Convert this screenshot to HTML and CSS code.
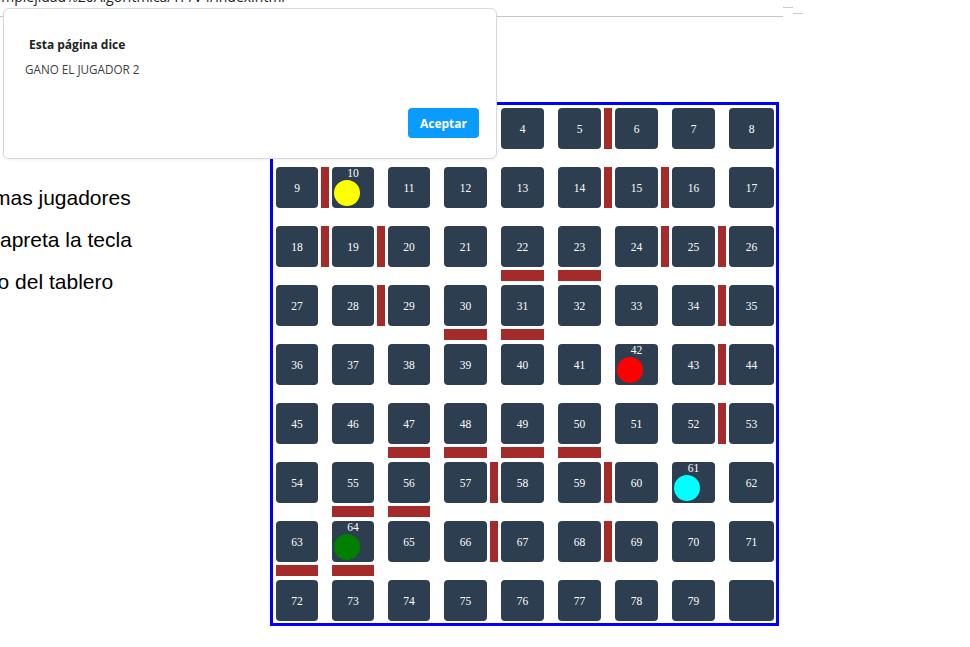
FILE: index.html
```html
<!DOCTYPE html>
<html lang="es">
<head>
<meta charset="utf-8">
<title>Tablero</title>
<link rel="stylesheet" href="styles.css">
</head>
<body>
<div class="chrome">
  <div class="addr"><span class="addr-text">Complejidad%20Algoritmica/TP/V4/index.html</span></div>
  <div class="dashes"><i class="d1"></i><i class="d2"></i></div>
</div>
<div class="page">
  <div class="info">
    <p>Es un juego de 2 o mas jugadores</p>
    <p>Para lanzar el dado apreta la tecla</p>
    <p>Llega al otro extremo del tablero</p>
  </div>
  <div class="board">
    <div class="c">0</div><div class="c">1</div><div class="c">2</div><div class="c">3</div><div class="c">4</div><div class="c wr">5</div><div class="c">6</div><div class="c">7</div><div class="c">8</div>
    <div class="c wr">9</div><div class="c p"><span class="n">10</span><i class="tok yellow"></i></div><div class="c">11</div><div class="c">12</div><div class="c">13</div><div class="c wr">14</div><div class="c wr">15</div><div class="c">16</div><div class="c">17</div>
    <div class="c wr">18</div><div class="c wr">19</div><div class="c">20</div><div class="c">21</div><div class="c wb">22</div><div class="c wb">23</div><div class="c wr">24</div><div class="c wr">25</div><div class="c">26</div>
    <div class="c">27</div><div class="c wr">28</div><div class="c">29</div><div class="c wb">30</div><div class="c wb">31</div><div class="c">32</div><div class="c">33</div><div class="c wr">34</div><div class="c">35</div>
    <div class="c">36</div><div class="c">37</div><div class="c">38</div><div class="c">39</div><div class="c">40</div><div class="c">41</div><div class="c p"><span class="n">42</span><i class="tok red"></i></div><div class="c wr">43</div><div class="c">44</div>
    <div class="c">45</div><div class="c">46</div><div class="c wb">47</div><div class="c wb">48</div><div class="c wb">49</div><div class="c wb">50</div><div class="c">51</div><div class="c wr">52</div><div class="c">53</div>
    <div class="c">54</div><div class="c wb">55</div><div class="c wb">56</div><div class="c wr">57</div><div class="c">58</div><div class="c wr">59</div><div class="c">60</div><div class="c p"><span class="n">61</span><i class="tok cyan"></i></div><div class="c">62</div>
    <div class="c wb">63</div><div class="c p wb"><span class="n">64</span><i class="tok green"></i></div><div class="c">65</div><div class="c wr">66</div><div class="c">67</div><div class="c wr">68</div><div class="c">69</div><div class="c">70</div><div class="c">71</div>
    <div class="c">72</div><div class="c">73</div><div class="c">74</div><div class="c">75</div><div class="c">76</div><div class="c">77</div><div class="c">78</div><div class="c">79</div><div class="c"></div>
  </div>
</div>
<div class="dialog" role="alertdialog">
  <div class="dlg-title">Esta página dice</div>
  <div class="dlg-msg">GANO EL JUGADOR 2</div>
  <div class="dlg-foot"><button class="dlg-btn">Aceptar</button></div>
</div>
</body>
</html>
```
FILE: styles.css
```css
html, body {
  margin: 0;
  padding: 0;
  background: #ffffff;
  overflow: hidden;
}
body {
  width: 970px;
  height: 647px;
  font-family: "Liberation Sans", Arial, sans-serif;
}

/* top strip */
.chrome {
  display: flex;
  align-items: flex-start;
  height: 17px;
}
.addr {
  width: 783px;
  height: 16px;
  border-bottom: 1px solid #c3c7cc;
  overflow: hidden;
}
.addr-text {
  display: block;
  margin-top: -13px;
  margin-left: -16px;
  font-family: "Open Sans", "Noto Sans", sans-serif;
  font-size: 14px;
  line-height: 19px;
  color: #202124;
  white-space: nowrap;
}
.dashes {
  display: flex;
  align-items: flex-start;
}
.dashes i {
  display: block;
  width: 10px;
  height: 1px;
  background: #c8cbcf;
}
.dashes .d1 { margin-top: 7px; }
.dashes .d2 { margin-top: 13px; }

/* page */
.page {
  display: flex;
  align-items: flex-start;
  margin-top: 85px;
}
.info {
  width: 270px;
  flex: none;
  padding-top: 75px;
  white-space: nowrap;
}
.info p {
  margin: 0 0 0 -188px;
  font-size: 21px;
  line-height: 42px;
  color: #000;
}

/* board */
.board {
  display: grid;
  grid-template-columns: 42px 42px 42px 43px 43px 43px 43px 43px 45px;
  grid-auto-rows: 41px;
  column-gap: 14px;
  row-gap: 18px;
  padding: 3px 2px 2px 3px;
  border: 3px solid #0000ff;
  flex: none;
}
.c {
  position: relative;
  background: #2c3e50;
  border-radius: 4px;
  color: #ffffff;
  font-family: "Liberation Serif", "Times New Roman", serif;
  font-size: 11.5px;
  display: flex;
  align-items: center;
  justify-content: center;
}
.c.p {
  display: block;
  text-align: center;
}
.c .n {
  display: block;
  line-height: 13px;
}
.tok {
  display: block;
  width: 26px;
  height: 26px;
  margin-left: 2px;
  border-radius: 50%;
}
.tok.yellow { background: #ffff00; }
.tok.red { background: #ff0000; }
.tok.cyan { background: #00ffff; }
.tok.green { background: #008000; }

.wr::after {
  content: "";
  position: absolute;
  top: 0;
  bottom: 0;
  right: -11px;
  width: 8px;
  background: #a52a2a;
}
.wb::before {
  content: "";
  position: absolute;
  left: 0;
  right: 0;
  bottom: -14px;
  height: 11px;
  background: #a52a2a;
}

/* alert dialog */
.dialog {
  position: absolute;
  left: 3px;
  top: 8px;
  width: 494px;
  height: 151px;
  box-sizing: border-box;
  background: #ffffff;
  border: 1px solid #d6d9dd;
  border-radius: 6px;
  box-shadow: 0 1px 3px rgba(0, 0, 0, 0.06);
  padding: 27px 17px 0 21px;
  font-family: "Open Sans", "Noto Sans", sans-serif;
}
.dlg-title {
  margin-left: 4px;
  font-size: 12px;
  font-weight: 700;
  line-height: 18px;
  color: #202124;
}
.dlg-msg {
  margin-top: 7px;
  font-size: 11.7px;
  line-height: 16px;
  color: #3c4043;
}
.dlg-foot {
  display: flex;
  justify-content: flex-end;
  margin-top: 31px;
}
.dlg-btn {
  width: 71px;
  height: 30px;
  border: none;
  border-radius: 4px;
  background: #0a9bff;
  color: #ffffff;
  font-family: "Open Sans", "Noto Sans", sans-serif;
  font-size: 12px;
  font-weight: 700;
  padding: 0;
}
```
